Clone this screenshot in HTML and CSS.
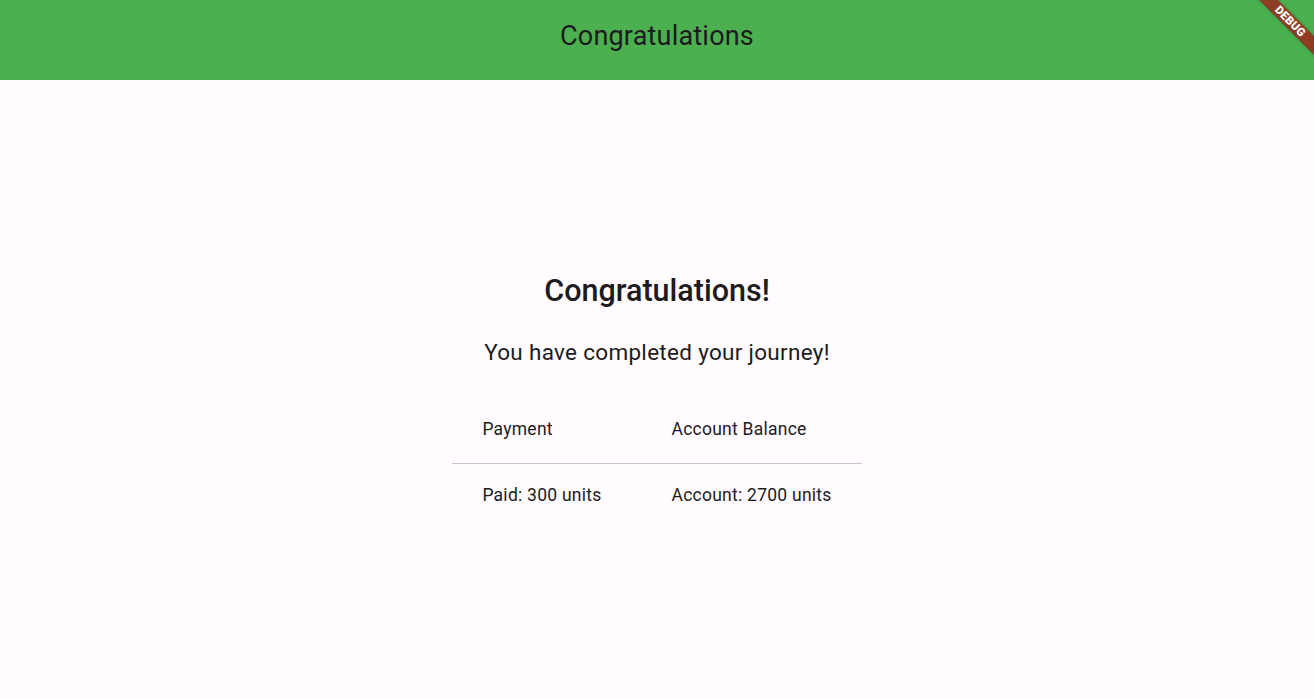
FILE: index.html
```html
<!DOCTYPE html>
<html>
<head>
<meta charset="utf-8">
<link rel="stylesheet" href="styles.css">
</head>
<body>
<div class="app">
  <header class="appbar"><span class="appbar-title">Congratulations</span></header>
  <main class="body">
    <div class="content">
      <h1 class="heading">Congratulations!</h1>
      <p class="subtitle">You have completed your journey!</p>
      <div class="table">
        <div class="cell head first">Payment</div>
        <div class="cell head last">Account Balance</div>
        <div class="cell first">Paid: 300 units</div>
        <div class="cell last">Account: 2700 units</div>
      </div>
    </div>
  </main>
  <div class="banner"><span>DEBUG</span></div>
</div>
</body>
</html>
```
FILE: styles.css
```css
html, body {
  margin: 0;
  padding: 0;
  height: 100%;
}
body {
  font-family: Roboto, "Liberation Sans", sans-serif;
  background: #fffbfe;
  color: #1d1b20;
  overflow: hidden;
}
.app {
  position: relative;
  height: 100%;
  display: flex;
  flex-direction: column;
  overflow: hidden;
}
.appbar {
  height: 80px;
  background: #4caf50;
  display: flex;
  align-items: center;
  justify-content: center;
  flex-shrink: 0;
}
.appbar-title {
  font-size: 27px;
  font-weight: 400;
  color: #1d1b20;
  letter-spacing: 0.2px;
  margin-top: -8px;
}
.body {
  flex: 1;
  display: flex;
  justify-content: center;
  align-items: flex-start;
}
.content {
  display: flex;
  flex-direction: column;
  align-items: center;
  padding-top: 191px;
}
.heading {
  margin: 0;
  font-size: 30.5px;
  font-weight: 500;
  line-height: 40px;
}
.subtitle {
  margin: 26px 0 0 0;
  font-size: 22.5px;
  font-weight: 400;
  line-height: 30px;
  letter-spacing: 0.3px;
}
.table {
  margin-top: 29px;
  display: grid;
  grid-template-columns: auto auto;
  font-size: 17.5px;
  letter-spacing: 0.25px;
}
.cell {
  box-sizing: border-box;
  display: flex;
  align-items: center;
  height: 60px;
  padding-top: 2px;
}
.cell.head {
  height: 68px;
  padding-top: 0;
  padding-bottom: 2px;
  border-bottom: 1px solid #cac4d0;
}
.cell.first {
  padding-left: 30px;
  padding-right: 35px;
}
.cell.last {
  padding-left: 35px;
  padding-right: 30px;
}
.banner {
  position: absolute;
  top: 15px;
  right: -32px;
  width: 112px;
  height: 13px;
  background: #8e3d24;
  transform: rotate(45deg);
  display: flex;
  align-items: center;
  justify-content: center;
  box-shadow: 0 0 3px rgba(0, 0, 0, 0.35);
}
.banner span {
  color: #fff;
  font-family: Roboto, "Liberation Sans", sans-serif;
  font-weight: 900;
  font-size: 11.5px;
  line-height: 13px;
  letter-spacing: 0.2px;
}
```
